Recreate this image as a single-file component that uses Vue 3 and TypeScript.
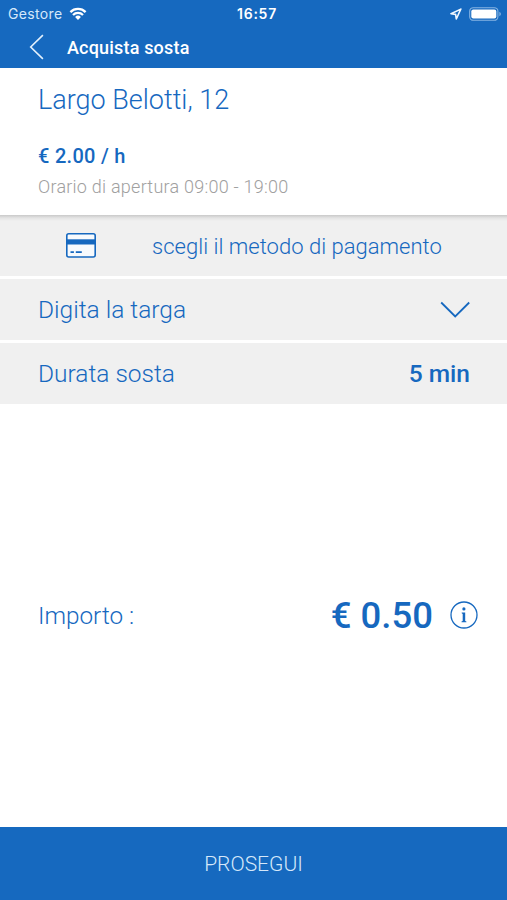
<script setup lang="ts">
import { ref } from 'vue'

const carrier = ref('Gestore')
const time = ref('16:57')
const address = ref('Largo Belotti, 12')
const rate = ref('€ 2.00 / h')
const hours = ref('Orario di apertura 09:00 - 19:00')
const duration = ref('5 min')
const amount = ref('€ 0.50')
</script>

<template>
  <main class="screen">
    <header class="top">
      <div class="status">
        <div class="carrier">
          <span>{{ carrier }}</span>
          <svg class="wifi" width="18" height="14" viewBox="0 0 18 14">
            <path d="M1.4 5.1a10.8 10.8 0 0 1 15.2 0M4 8a7.1 7.1 0 0 1 10 0" />
            <path class="dot" d="M9 13 6.1 10a4.1 4.1 0 0 1 5.8 0z" />
          </svg>
        </div>
        <span class="time">{{ time }}</span>
        <div class="indicators">
          <svg width="12" height="12" viewBox="0 0 12 12" class="location">
            <path d="M10.8 1.1 1 5.7l4.6.7.7 4.6z" />
          </svg>
          <svg width="33" height="14" viewBox="0 0 33 14" class="battery">
            <rect class="shell" x=".7" y=".7" width="28.2" height="12.6" rx="3.6" />
            <rect class="charge" x="2.3" y="2.4" width="25" height="9.2" rx="2" />
            <path class="cap" d="M30.4 4.7q1.5.7 1.5 2.3t-1.5 2.3z" />
          </svg>
        </div>
      </div>
      <nav class="nav">
        <button class="back" aria-label="Indietro">
          <svg width="15" height="26" viewBox="0 0 15 26"><path d="M13.9 1.2 1.7 13l12.2 11.8" /></svg>
        </button>
        <h1>Acquista sosta</h1>
      </nav>
    </header>

    <section class="place">
      <h2>{{ address }}</h2>
      <strong>{{ rate }}</strong>
      <p>{{ hours }}</p>
    </section>

    <section class="options">
      <div class="row payment">
        <svg class="card" width="30" height="25" viewBox="0 0 30 25">
          <rect class="frame" x=".8" y=".8" width="28.4" height="23.2" rx="2" />
          <path class="stripe" d="M1 6.3h28v5.2H1z" />
          <path class="marks" d="M4.5 19.1h3.4M9.8 19.1h6" />
        </svg>
        <span class="method">scegli il metodo di pagamento</span>
      </div>
      <div class="row">
        <span class="plate">Digita la targa</span>
        <svg class="chevron" width="30" height="18" viewBox="0 0 30 18"><path d="m1.2 1.5 14 14 14-14" /></svg>
      </div>
      <div class="row">
        <span class="stay">Durata sosta</span>
        <strong class="duration">{{ duration }}</strong>
      </div>
    </section>

    <section class="total">
      <span class="label">Importo :</span>
      <strong class="amount">{{ amount }}</strong>
      <svg class="info" width="28" height="28" viewBox="0 0 28 28">
        <circle class="ring" cx="14" cy="14" r="13" />
        <circle class="point" cx="13.9" cy="7.9" r="1.6" />
        <path class="point" d="M11.7 11.5h3.5v8.4l1.2.5v.8h-4.9v-.8l1.2-.5v-7l-1-.6z" />
      </svg>
    </section>

    <button class="proceed"><span>PROSEGUI</span></button>
  </main>
</template>

<style>
body {
  margin: 0;
  background: #fff;
}
</style>

<style scoped>
.screen {
  display: flex;
  flex-direction: column;
  width: 100%;
  height: 900px;
  font-family: Roboto, sans-serif;
  font-weight: 300;
  color: #1668bf;
  background: #fff;
  overflow: hidden;
}
h1, h2, p { margin: 0; }
svg { display: block; fill: none; flex: none; }
span, strong, h1, h2, p { white-space: nowrap; }
strong { font-weight: 500; }
button { border: 0; padding: 0; background: none; font: inherit; color: inherit; }

.top { height: 68px; flex: none; background: #1669bf; color: #fff; }
.status {
  display: grid;
  grid-template-columns: 1fr auto 1fr;
  align-items: center;
  height: 27px;
  padding: 0 5px 0 8px;
  box-sizing: border-box;
  font-family: Inter, sans-serif;
}
.carrier { display: flex; align-items: center; gap: 6px; font-size: 14px; font-weight: 400; color: #d5e8fa; letter-spacing: .35px; }
.wifi { stroke: #fff; stroke-width: 2.3; }
.wifi .dot { fill: #fff; stroke: none; }
.time { padding-left: 4px; font-size: 14px; font-weight: 600; letter-spacing: .75px; }
.indicators { display: flex; align-items: center; justify-content: flex-end; gap: 7px; }
.location { stroke: #f2f8ff; stroke-width: 1.6; stroke-linejoin: round; }
.shell { stroke: #86b4e3; stroke-width: 1.1; }
.charge { fill: #fff; }
.cap { fill: #86b4e3; }
.nav { display: flex; align-items: center; height: 40px; padding-left: 29px; gap: 23px; }
.back svg { stroke: #e3f0fc; stroke-width: 1.6; }
h1 { padding-top: 2px; font-size: 18px; line-height: 24px; font-weight: 500; letter-spacing: .18px; }

.place { height: 147px; flex: none; padding: 16px 38px 0; box-sizing: border-box; }
h2 { font-size: 27px; line-height: 32px; font-weight: 300; }
.place strong { display: block; margin-top: 28px; font-size: 20px; line-height: 24px; letter-spacing: .28px; }
.place p { margin-top: 8px; font-size: 18px; line-height: 22px; letter-spacing: .24px; color: #a0a0a0; }

.options { display: flex; flex-direction: column; gap: 3px; flex: none; }
.row {
  display: flex;
  align-items: center;
  justify-content: space-between;
  height: 61px;
  padding: 0 37px 0 38px;
  box-sizing: border-box;
  background: #f0f0f0;
  font-size: 24.5px;
}
.row:last-child { height: 60.5px; }
.payment {
  justify-content: flex-start;
  gap: 56px;
  padding-left: 66px;
  font-size: 22px;
  background: linear-gradient(#c9c9c9, #e4e4e4 3px, #f0f0f0 6px);
}
.method { padding-top: 2px; letter-spacing: .02px; }
.frame { stroke: #1668bf; stroke-width: 1.6; fill: #f7fafd; }
.stripe { fill: #1668bf; }
.marks { stroke: #1668bf; stroke-width: 1.8; }
.chevron { stroke: #1668bf; stroke-width: 1.8; }

.total { display: flex; align-items: center; height: 56px; margin-top: 183.5px; padding: 0 29px 0 38px; }
.label { flex: 1; font-size: 24.3px; }
.amount { font-size: 36.5px; }
.info { margin-left: 17px; }
.ring { stroke: #1668bf; stroke-width: 1.3; }
.point { fill: #1668bf; }

.proceed { height: 73px; flex: none; margin-top: auto; background: #1669bf; color: #d5e8fa; font-size: 21px; }
</style>
